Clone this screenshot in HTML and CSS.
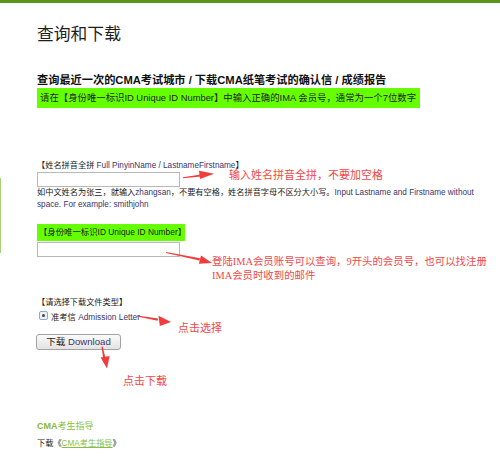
FILE: index.html
```html
<!DOCTYPE html>
<html lang="zh-CN">
<head>
<meta charset="utf-8">
<title>查询和下载</title>
<link rel="stylesheet" href="styles.css">
</head>
<body>
<div class="topbar"></div>
<div class="sidebar-line"></div>
<div class="page">
  <h1 class="title">查询和下载</h1>
  <h2 class="subtitle">查询最近一次的CMA考试城市 / 下载CMA纸笔考试的确认信 / 成绩报告</h2>
  <div class="notice">请在【身份唯一标识ID Unique ID Number】中输入正确的IMA 会员号，通常为一个7位数字</div>

  <div class="label label-first">【姓名拼音全拼 <span class="en">Full PinyinName / LastnameFirstname</span>】</div>
  <input class="field" type="text">
  <p class="help">如中文姓名为张三，就输入<span class="en">zhangsan</span>，不要有空格，姓名拼音字母不区分大小写。<span class="en">Input Lastname and Firstname without</span> <span class="en">space. For example: smithjohn</span></p>

  <div class="label label-green">【身份唯一标识ID Unique ID Number】</div>
  <input class="field field-second" type="text">

  <div class="label label-third">【请选择下载文件类型】</div>
  <div class="radio-row"><span class="radio"><span class="radio-dot"></span></span><span>准考信 <span class="en">Admission Letter</span></span></div>

  <button class="btn" type="button">下载 <span class="en">Download</span></button>

  <div class="guide-title"><b>CMA</b>考生指导</div>
  <div class="guide-line">下载《<a class="guide-link" href="#">CMA考生指导</a>》</div>
</div>

<div class="note note-name">输入姓名拼音全拼，不要加空格</div>
<div class="note note-id"><div>登陆IMA会员账号可以查询，9开头的会员号，也可以找注册</div><div>IMA会员时收到的邮件</div></div>
<div class="note note-select">点击选择</div>
<div class="note note-download">点击下载</div>

<svg class="arrows" width="500" height="476" viewBox="0 0 500 476" xmlns="http://www.w3.org/2000/svg">
  <g fill="#f23b3b" stroke="none">
    <polygon points="183,177.3 201,174.4 201,176.4 183,178.3"/>
    <polygon points="199,170.8 214,173.8 200,179"/>
    <polygon points="166,252 200,258.2 199.5,260.4 166,253"/>
    <polygon points="201,255.6 212,263 198.8,263.8"/>
    <polygon points="137,315.5 158,318.6 157.6,320.8 137,316.6"/>
    <polygon points="158.5,315.8 171,322 159.8,326"/>
    <polygon points="101.4,346.5 102.6,346.4 105.4,357.5 103.2,358"/>
    <polygon points="100.6,357.6 109.6,356 107,368.5"/>
  </g>
</svg>
</body>
</html>
```

FILE: styles.css
```css
html, body {
  margin: 0;
  padding: 0;
  background: #ffffff;
}

body {
  position: relative;
  width: 500px;
  height: 476px;
  overflow: hidden;
  font-family: "Liberation Sans", "Noto Sans CJK SC", sans-serif;
  color: #222222;
}

.topbar {
  height: 3px;
  background: #56961a;
}

.sidebar-line {
  position: absolute;
  left: 0;
  top: 178px;
  width: 1px;
  height: 75px;
  background: #a5d474;
}

.page {
  padding: 0 20px 0 37px;
}

.title {
  margin: 21px 0 0;
  font-size: 16.8px;
  line-height: 22px;
  font-weight: normal;
  color: #1e1e1e;
}

.subtitle {
  margin: 27px 0 0;
  font-size: 11.2px;
  line-height: 14px;
  font-weight: bold;
  color: #111111;
}

.notice {
  margin-top: 1px;
  width: 380px;
  padding-left: 3px;
  height: 20px;
  line-height: 20px;
  font-size: 9.4px;
  background: #66ff00;
  color: #222222;
  white-space: nowrap;
}

.label {
  font-size: 8.2px;
  line-height: 11px;
  color: #1a1a1a;
  white-space: nowrap;
}

.label-first {
  margin-top: 52px;
}

.en {
  color: #3a356e;
}

.field {
  display: block;
  box-sizing: border-box;
  width: 143px;
  height: 15px;
  margin: 1px 0 0;
  padding: 0;
  border: 1px solid #b8b8b8;
  background: #ffffff;
}

.help {
  margin: 0;
  width: 442px;
  font-size: 8.2px;
  line-height: 12px;
  color: #1a1a1a;
}

.label-green {
  display: block;
  margin-top: 13px;
  box-sizing: border-box;
  width: 148px;
  height: 17px;
  line-height: 17px;
  padding-left: 2px;
  font-size: 8.4px;
  background: #66ff00;
  color: #1a1a1a;
}

.field-second {
  margin-top: 1px;
}

.label-third {
  margin-top: 40px;
}

.radio-row {
  display: flex;
  align-items: center;
  gap: 3px;
  margin-top: 2px;
  margin-left: 2px;
  height: 11px;
  font-size: 8.3px;
  color: #1a1a1a;
  white-space: nowrap;
}

.radio {
  box-sizing: border-box;
  width: 9px;
  height: 9px;
  border: 1px solid #8aa8d8;
  border-radius: 2px;
  background: #eef2f8;
  display: flex;
  align-items: center;
  justify-content: center;
}

.radio-dot {
  width: 3px;
  height: 3px;
  border-radius: 50%;
  background: #444444;
}

.btn {
  display: block;
  box-sizing: border-box;
  margin: 13px 0 0 -1px;
  width: 85px;
  height: 16px;
  padding: 0;
  border: 1px solid #a3a3a3;
  border-radius: 3px;
  background: linear-gradient(#fafafa, #e3e3e3);
  font-family: "Liberation Sans", "Noto Sans CJK SC", sans-serif;
  font-size: 9.6px;
  line-height: 14px;
  color: #222222;
}

.guide-title {
  margin-top: 70px;
  font-size: 9px;
  line-height: 13px;
  color: #86c040;
}

.guide-title b {
  color: #8ab83a;
}

.guide-line {
  margin-top: 5px;
  font-size: 8.2px;
  line-height: 12px;
  color: #1a1a1a;
}

.guide-link {
  color: #86c040;
  text-decoration: underline;
}

.note {
  position: absolute;
  color: #f24848;
  font-size: 11px;
  line-height: 13px;
  white-space: nowrap;
}

.note-name {
  left: 229px;
  top: 169px;
}

.note-id {
  left: 212px;
  top: 255px;
  font-size: 10.4px;
  line-height: 14px;
  font-family: "Liberation Serif", "Noto Sans CJK SC", serif;
}

.note-select {
  left: 178px;
  top: 322px;
}

.note-download {
  left: 123px;
  top: 375px;
}

.arrows {
  position: absolute;
  left: 0;
  top: 0;
  pointer-events: none;
}
```
